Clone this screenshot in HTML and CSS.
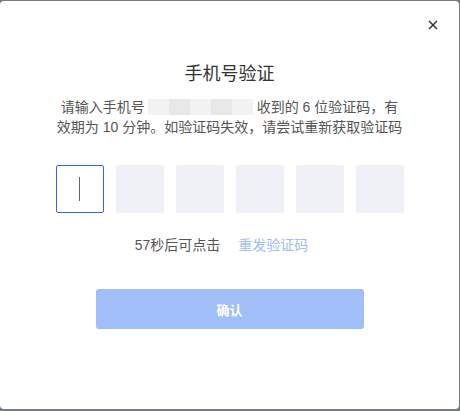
FILE: index.html
```html
<!DOCTYPE html>
<html lang="zh-CN">

<head>
  <meta charset="UTF-8">
  <meta name="viewport" content="width=device-width, initial-scale=1.0">
  <title>手机号验证</title>
  <link rel="stylesheet" href="styles.css">
</head>

<body>
  <div class="modal">
    <button class="close" aria-label="关闭">
      <svg width="10" height="10" viewBox="0 0 10 10">
        <path d="M1 1L9 9M9 1L1 9" stroke="#333" stroke-width="1.5" fill="none" />
      </svg>
    </button>

    <div class="title">手机号验证</div>
    <p class="desc">
      请输入手机号<span class="phone"><i></i><i class="dark"></i><i></i><i class="dark"></i><i></i></span>收到的 6 位验证码，有效期为 10 分钟。如验证码失效，请尝试重新获取验证码
    </p>

    <div class="codes">
      <div class="code active"><span class="caret"></span></div>
      <div class="code"></div>
      <div class="code"></div>
      <div class="code"></div>
      <div class="code"></div>
      <div class="code"></div>
    </div>

    <div class="resend">
      <span class="count">57秒后可点击</span>
      <a class="resend-link">重发验证码</a>
    </div>

    <button class="confirm">确认</button>
  </div>
</body>

</html>
```

FILE: styles.css
```css
html,
body {
  margin: 0;
  padding: 0;
  background: #787b7e;
  height: 411px;
  overflow: hidden;
}

.modal {
  position: relative;
  box-sizing: border-box;
  margin: 1px 1px 0 0;
  height: 408px;
  background: #fff;
  border-radius: 4px;
  display: flex;
  flex-direction: column;
  align-items: center;
  font-family: "Liberation Sans", "Noto Sans CJK SC", sans-serif;
  color: #333;
}

.close {
  position: absolute;
  top: 18px;
  right: 20px;
  width: 12px;
  height: 12px;
  padding: 0;
  border: 0;
  background: none;
  display: flex;
  align-items: center;
  justify-content: center;
}

.title {
  margin-top: 60px;
  font-size: 18px;
  line-height: 26px;
  color: #333;
}

.desc {
  width: 348px;
  margin: 10px 0 0;
  font-size: 14px;
  line-height: 20px;
  color: #555;
  text-align: center;
}

.phone {
  display: inline-flex;
  vertical-align: -3px;
  height: 16px;
  width: 105px;
  margin: 0 4px 0 3px;
}

.phone i {
  flex: 1;
  background: #f2f2f2;
}

.phone i.dark {
  background: #e8e8e8;
}

.codes {
  display: flex;
  gap: 12px;
  margin-top: 28px;
}

.code {
  box-sizing: border-box;
  width: 48px;
  height: 48px;
  border-radius: 2px;
  background: #f0f1f6;
  display: flex;
  align-items: center;
  justify-content: center;
}

.code.active {
  background: #fff;
  border: 1px solid #3366ee;
}

.caret {
  width: 1px;
  height: 24px;
  background: #666;
}

.resend {
  margin: 22px 16px 0 0;
  font-size: 14px;
  line-height: 20px;
  display: flex;
  gap: 18px;
}

.count {
  color: #555;
}

.resend-link {
  color: #a0bcf5;
  cursor: pointer;
}

.confirm {
  margin-top: 34px;
  width: 268px;
  height: 40px;
  border: 0;
  border-radius: 3px;
  background: #a0bff8;
  color: #fff;
  font-family: inherit;
  font-size: 13px;
  font-weight: 700;
}
```
